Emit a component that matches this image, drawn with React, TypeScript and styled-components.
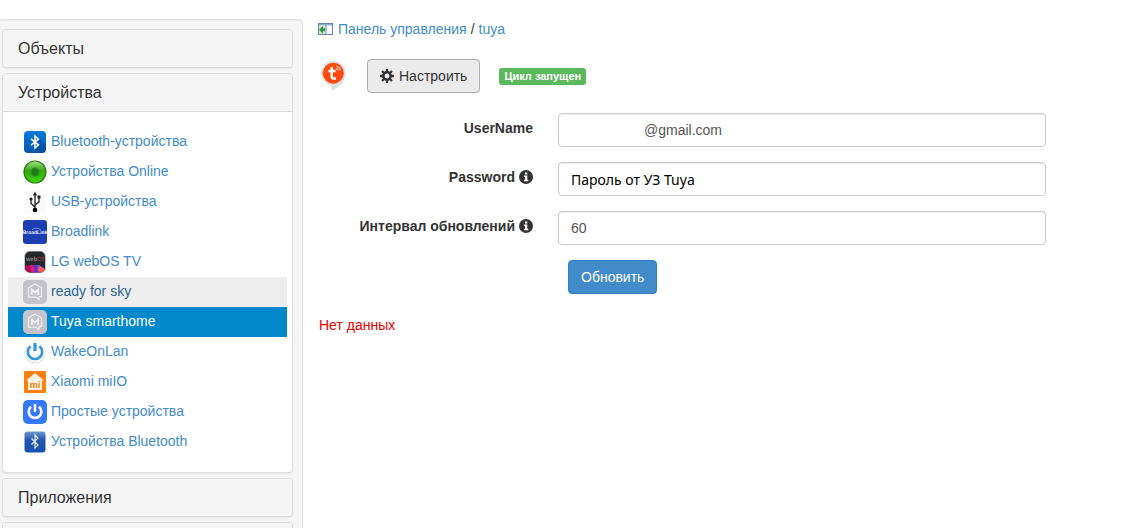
import React from 'react';
import styled, { createGlobalStyle, css } from 'styled-components';

const GlobalStyle = createGlobalStyle`
  *, *::before, *::after { box-sizing: border-box; }
  body {
    margin: 0;
    background: #fff;
    color: #333;
    font: 14px/20px "Liberation Sans", Arial, sans-serif;
  }
`;

const Page = styled.div`
  display: flex;
  height: 100vh;
  overflow: hidden;
`;

const Sidebar = styled.aside`
  flex: 0 0 303px;
  display: flex;
  flex-direction: column;
  gap: 5px;
  margin-top: 19px;
  padding: 9px 9px 0 2px;
  overflow: hidden;
  background: #f5f5f5;
  border: 1px solid #e3e3e3;
  border-width: 1px 1px 0 0;
  border-top-right-radius: 4px;
  box-shadow: inset 0 1px 1px rgba(0, 0, 0, 0.05);
`;

const Panel = styled.section`
  flex: none;
  background: #fff;
  border: 1px solid #ddd;
  border-radius: 4px;
  box-shadow: 0 1px 1px rgba(0, 0, 0, 0.05);
`;

const PanelHeading = styled.h4`
  min-height: 37px;
  margin: 0;
  padding: 10px 15px;
  border-radius: 3px;
  background: #f5f5f5;
  font-size: 16px;
  font-weight: 400;
  line-height: 17px;
`;

const DeviceList = styled.ul`
  margin: 0;
  padding: 15px 5px;
  border-top: 1px solid #ddd;
  list-style: none;
`;

const DeviceLink = styled.a<{ $state?: 'hover' | 'active' }>`
  display: flex;
  align-items: center;
  gap: 4px;
  height: 30px;
  padding: 0 15px;
  color: #428bca;
  line-height: 28px;
  text-decoration: none;
  ${({ $state }) => $state === 'hover' && css`
    background: #eee;
    color: #2a6496;
  `}
  ${({ $state }) => $state === 'active' && css`
    background: #0088cc;
    color: #fff;
  `}
  span { align-self: flex-start; }
`;

const Main = styled.main`
  flex: 1;
  min-width: 0;
  padding: 19px 15px;
`;

const Breadcrumb = styled.nav`
  display: flex;
  align-items: center;
  gap: 4px;
`;

const CrumbLink = styled.a`
  color: #428bca;
  text-decoration: none;
`;

const Toolbar = styled.div`
  display: flex;
  align-items: center;
  gap: 19px;
  margin-top: 20px;
`;

const Button = styled.button<{ $primary?: boolean }>`
  display: inline-flex;
  align-items: center;
  gap: 5px;
  height: 34px;
  padding: 0 12px;
  border: 1px solid ${({ $primary }) => ($primary ? '#357ebd' : '#adadad')};
  border-radius: 4px;
  background: ${({ $primary }) => ($primary ? '#428bca' : '#ebebeb')};
  color: ${({ $primary }) => ($primary ? '#fff' : '#333')};
  font: inherit;
  cursor: pointer;
`;

const StatusLabel = styled.span`
  padding: 0 5px;
  border-radius: 3px;
  background: #5cb85c;
  color: #fff;
  font-size: 11px;
  font-weight: 700;
  line-height: 17px;
`;

const Form = styled.form`
  display: grid;
  grid-template-columns: 215px minmax(0, 1fr);
  gap: 15px 25px;
  margin-top: 20px;
  padding-right: 60px;
`;

const FieldLabel = styled.label`
  display: flex;
  justify-content: flex-end;
  align-items: center;
  gap: 4px;
  height: 30px;
  font-weight: 700;
`;

const Field = styled.input<{ $masked?: boolean; $alt?: boolean }>`
  width: 100%;
  height: 34px;
  padding: 0 12px;
  padding-left: ${({ $masked }) => ($masked ? '85px' : '12px')};
  border: 1px solid #ccc;
  border-radius: 4px;
  background: #fff;
  box-shadow: inset 0 1px 1px rgba(0, 0, 0, 0.075);
  color: ${({ $alt }) => ($alt ? '#000' : '#555')};
  font: ${({ $alt }) => ($alt ? '14px "Noto Sans", sans-serif' : 'inherit')};
`;

const FormActions = styled.div`
  grid-column: 2;
  padding-left: 10px;
`;

const EmptyNote = styled.p`
  margin: 21px 1px;
  color: #e00;
`;

const Svg = ({ size = 24, children }: { size?: number; children: React.ReactNode }) => (
  <svg width={size} height={size} viewBox={`0 0 ${size} ${size}`} aria-hidden="true">
    {children}
  </svg>
);

const BluetoothIcon = () => (
  <Svg>
    <defs>
      <linearGradient id="bt" x1="0" y1="0" x2="0" y2="1">
        <stop offset="0" stopColor="#0879dd" /><stop offset="1" stopColor="#0657a8" />
      </linearGradient>
    </defs>
    <rect x="1" y="1" width="22" height="22" rx="4" fill="url(#bt)" />
    <path d="M12 5l11 10v4a4 4 0 0 1-4 4h-3l-4-4z" fill="#044a91" opacity=".5" />
    <path d="M8 8.800l7.500 6L12 18V6l3.500 3.200L8 15.200" fill="none" stroke="#fff" strokeWidth="1.500" />
  </Svg>
);

const OnlineIcon = () => (
  <Svg>
    <defs>
      <linearGradient id="on" x1="0" y1="0" x2="0" y2="1">
        <stop offset="0" stopColor="#a5e08c" /><stop offset=".45" stopColor="#31a610" /><stop offset="1" stopColor="#3fd90c" />
      </linearGradient>
    </defs>
    <circle cx="12" cy="12" r="11" fill="url(#on)" stroke="#2c7d16" strokeWidth="1.200" />
    <circle cx="12" cy="12" r="4.200" fill="#1c7d17" stroke="#3a9a2a" />
  </Svg>
);

const UsbIcon = () => (
  <Svg>
    <rect x="1" y="1" width="22" height="22" fill="#fafafa" />
    <path d="M12 4v16M12 17l-4-3.500V9M12 15l4-3V7" fill="none" stroke="#222" strokeWidth="1.300" />
    <path d="M12 1.500l2 4h-4z" fill="#222" />
    <circle cx="12" cy="20" r="2.300" fill="#000" />
    <circle cx="8" cy="9" r="1.600" fill="#222" />
    <rect x="14.500" y="5.500" width="3" height="3" fill="#222" />
  </Svg>
);

const BroadlinkIcon = () => (
  <Svg>
    <rect width="24" height="24" rx="3" fill="#1b3fb2" />
    <text x="12" y="14" textAnchor="middle" fontSize="5" fontWeight="700" textRendering="geometricPrecision" fill="#e3e9fb">BroadLink</text>
    <path d="M9 9.500q5-3 9 .5" fill="none" stroke="#9fb2ec" strokeWidth=".7" />
  </Svg>
);

const WebosIcon = () => (
  <Svg>
    <defs>
      <clipPath id="wo"><rect x="2" y="1.500" width="20" height="21" rx="5" /></clipPath>
    </defs>
    <rect x="1" y="1" width="22" height="22" rx="5" fill="#c9c9cc" />
    <g clipPath="url(#wo)">
      <rect width="24" height="24" fill="#25282b" />
      <path d="M0 16l8-1 3 9H0z" fill="#b80b50" />
      <path d="M7 15h4l2 9H9z" fill="#d41d8c" />
      <path d="M10.500 15h4l1 9h-4z" fill="#7a28b8" />
      <path d="M14 15h4l1 9h-4z" fill="#4b63d3" />
      <path d="M17 15l6-1v10h-6z" fill="#2b223f" />
      <path d="M14.500 19l3-3 6 4v4h-6z" fill="#ff5b57" />
    </g>
    <text x="3" y="11" fontSize="6" textRendering="geometricPrecision" fill="#aaa">web<tspan fill="#b33a4b">OS</tspan></text>
  </Svg>
);

const ModuleIcon = () => (
  <Svg>
    <rect width="24" height="24" rx="5" fill="#c3c3c9" />
    <path d="M12 4l6.500 3.700v9H16v3L13 17.200H5.500V7.700z" fill="none" stroke="#ececf0" strokeWidth="1.300" strokeLinejoin="round" />
    <path d="M8.800 15V9.500l3.200 3 3.200-3V15" fill="none" stroke="#f1f1f4" strokeWidth="1.800" />
  </Svg>
);

const WakeIcon = () => (
  <Svg>
    <circle cx="12" cy="12.500" r="10.800" fill="#dedede" />
    <circle cx="12" cy="12" r="10.500" fill="#fafafa" />
    <path d="M7.500 6.200a7.200 7.200 0 1 0 9 0" fill="none" stroke="#3498db" strokeWidth="2.700" />
    <path d="M12 3v8" stroke="#3498db" strokeWidth="3.200" />
  </Svg>
);

const XiaomiIcon = () => (
  <Svg>
    <rect x="1" y="1" width="22" height="22" rx="1" fill="#ff7f0e" />
    <path d="M12 3l9 7.500h-2V20H5v-9.500H3z" fill="#fff2e5" />
    <text x="12" y="18" textAnchor="middle" fontSize="9" fontWeight="700" fill="#f57600">mi</text>
  </Svg>
);

const PowerIcon = () => (
  <Svg>
    <rect width="24" height="24" rx="5" fill="#3478fc" />
    <path d="M8 6.800a6.300 6.300 0 1 0 8 0" fill="none" stroke="#fff" strokeWidth="2.700" />
    <path d="M12 4v8" stroke="#fff" strokeWidth="2.500" />
  </Svg>
);

const BluetoothDarkIcon = () => (
  <Svg>
    <defs>
      <linearGradient id="bd" x1="0" y1="0" x2="0" y2="1">
        <stop offset="0" stopColor="#7099d0" /><stop offset=".4" stopColor="#2456ae" /><stop offset="1" stopColor="#1551b0" />
      </linearGradient>
    </defs>
    <rect x="1.500" y="1.500" width="21" height="21" rx="3" fill="url(#bd)" />
    <path d="M8.500 8.500l6.500 6.500-3 3V5l3 3-6.500 6.500" fill="none" stroke="#e9effa" strokeWidth="1.200" />
  </Svg>
);

const PanelIcon = () => (
  <Svg size={16}>
    <rect x=".5" y="2.500" width="14" height="11" fill="#fafcff" stroke="#6688b0" />
    <path d="M1 3h13v1.500H1z" fill="#8fb0d6" />
    <path d="M1 4.500h6.500V13H1z" fill="#d5ead0" />
    <path d="M8 4v9" stroke="#6688b0" />
    <path d="M1 8.700l4-4v2.500h2v3H5v2.500z" fill="#3c9440" />
  </Svg>
);

const TuyaLogo = () => (
  <svg width="30" height="34" viewBox="0 0 30 34" role="img" aria-label="Tuya">
    <path d="M15.300 2a12.200 12.200 0 0 0-3.300 24q1.800 1 1.800 6Q24 27 26.500 19.500A12.200 12.200 0 0 0 15.300 2z" fill="#dedfe3" />
    <circle cx="15.300" cy="14.200" r="10.500" fill="#ff4a0d" />
    <path d="M13.700 8v9.500q0 2.500 4.300 2M10.500 12h7" fill="none" stroke="#fff" strokeWidth="2.500" />
    <path d="M18 9.500q2 .2 2.300 2.300M18.300 7.300q4 .4 4.300 4.300" fill="none" stroke="#fff" strokeWidth=".9" />
  </svg>
);

const CogIcon = () => (
  <Svg size={14}>
    <g stroke="#333" fill="none">
      <circle cx="7" cy="7" r="3.700" strokeWidth="2.500" />
      {[0, 45, 90, 135].map((angle) => (
        <path key={angle} d="M7 0v2.800M7 11.200v2.800" strokeWidth="2.300" transform={`rotate(${angle} 7 7)`} />
      ))}
    </g>
  </Svg>
);

const InfoIcon = () => (
  <Svg size={14}>
    <circle cx="7" cy="7" r="7" fill="#333" />
    <path d="M6 2.500h2.300v2H6zM5 5.500h3.300v4.200h1v1.500H5V9.700h1V7H5z" fill="#fff" />
  </Svg>
);

type Device = { name: string; Icon: React.FC; state?: 'hover' | 'active' };

const devices: Device[] = [
  { name: 'Bluetooth-устройства', Icon: BluetoothIcon },
  { name: 'Устройства Online', Icon: OnlineIcon },
  { name: 'USB-устройства', Icon: UsbIcon },
  { name: 'Broadlink', Icon: BroadlinkIcon },
  { name: 'LG webOS TV', Icon: WebosIcon },
  { name: 'ready for sky', Icon: ModuleIcon, state: 'hover' },
  { name: 'Tuya smarthome', Icon: ModuleIcon, state: 'active' },
  { name: 'WakeOnLan', Icon: WakeIcon },
  { name: 'Xiaomi miIO', Icon: XiaomiIcon },
  { name: 'Простые устройства', Icon: PowerIcon },
  { name: 'Устройства Bluetooth', Icon: BluetoothDarkIcon },
];

export default function App() {
  return (
    <>
      <GlobalStyle />
      <Page>
        <Sidebar>
          <Panel><PanelHeading>Объекты</PanelHeading></Panel>
          <Panel>
            <PanelHeading>Устройства</PanelHeading>
            <DeviceList>
              {devices.map(({ name, Icon, state }) => (
                <li key={name}>
                  <DeviceLink href="#" $state={state}>
                    <Icon />
                    <span>{name}</span>
                  </DeviceLink>
                </li>
              ))}
            </DeviceList>
          </Panel>
          <Panel><PanelHeading>Приложения</PanelHeading></Panel>
          <Panel><PanelHeading /></Panel>
        </Sidebar>
        <Main>
          <Breadcrumb>
            <PanelIcon />
            <CrumbLink href="#">Панель управления</CrumbLink>
            <span>/</span>
            <CrumbLink href="#">tuya</CrumbLink>
          </Breadcrumb>
          <Toolbar>
            <TuyaLogo />
            <Button type="button"><CogIcon />Настроить</Button>
            <StatusLabel>Цикл запущен</StatusLabel>
          </Toolbar>
          <Form onSubmit={(event) => event.preventDefault()}>
            <FieldLabel htmlFor="username">UserName</FieldLabel>
            <Field id="username" type="text" defaultValue="@gmail.com" $masked />
            <FieldLabel htmlFor="password">Password <InfoIcon /></FieldLabel>
            <Field id="password" type="text" defaultValue="Пароль от УЗ Tuya" $alt />
            <FieldLabel htmlFor="interval">Интервал обновлений <InfoIcon /></FieldLabel>
            <Field id="interval" type="text" defaultValue="60" />
            <FormActions><Button type="submit" $primary>Обновить</Button></FormActions>
          </Form>
          <EmptyNote>Нет данных</EmptyNote>
        </Main>
      </Page>
    </>
  );
}
